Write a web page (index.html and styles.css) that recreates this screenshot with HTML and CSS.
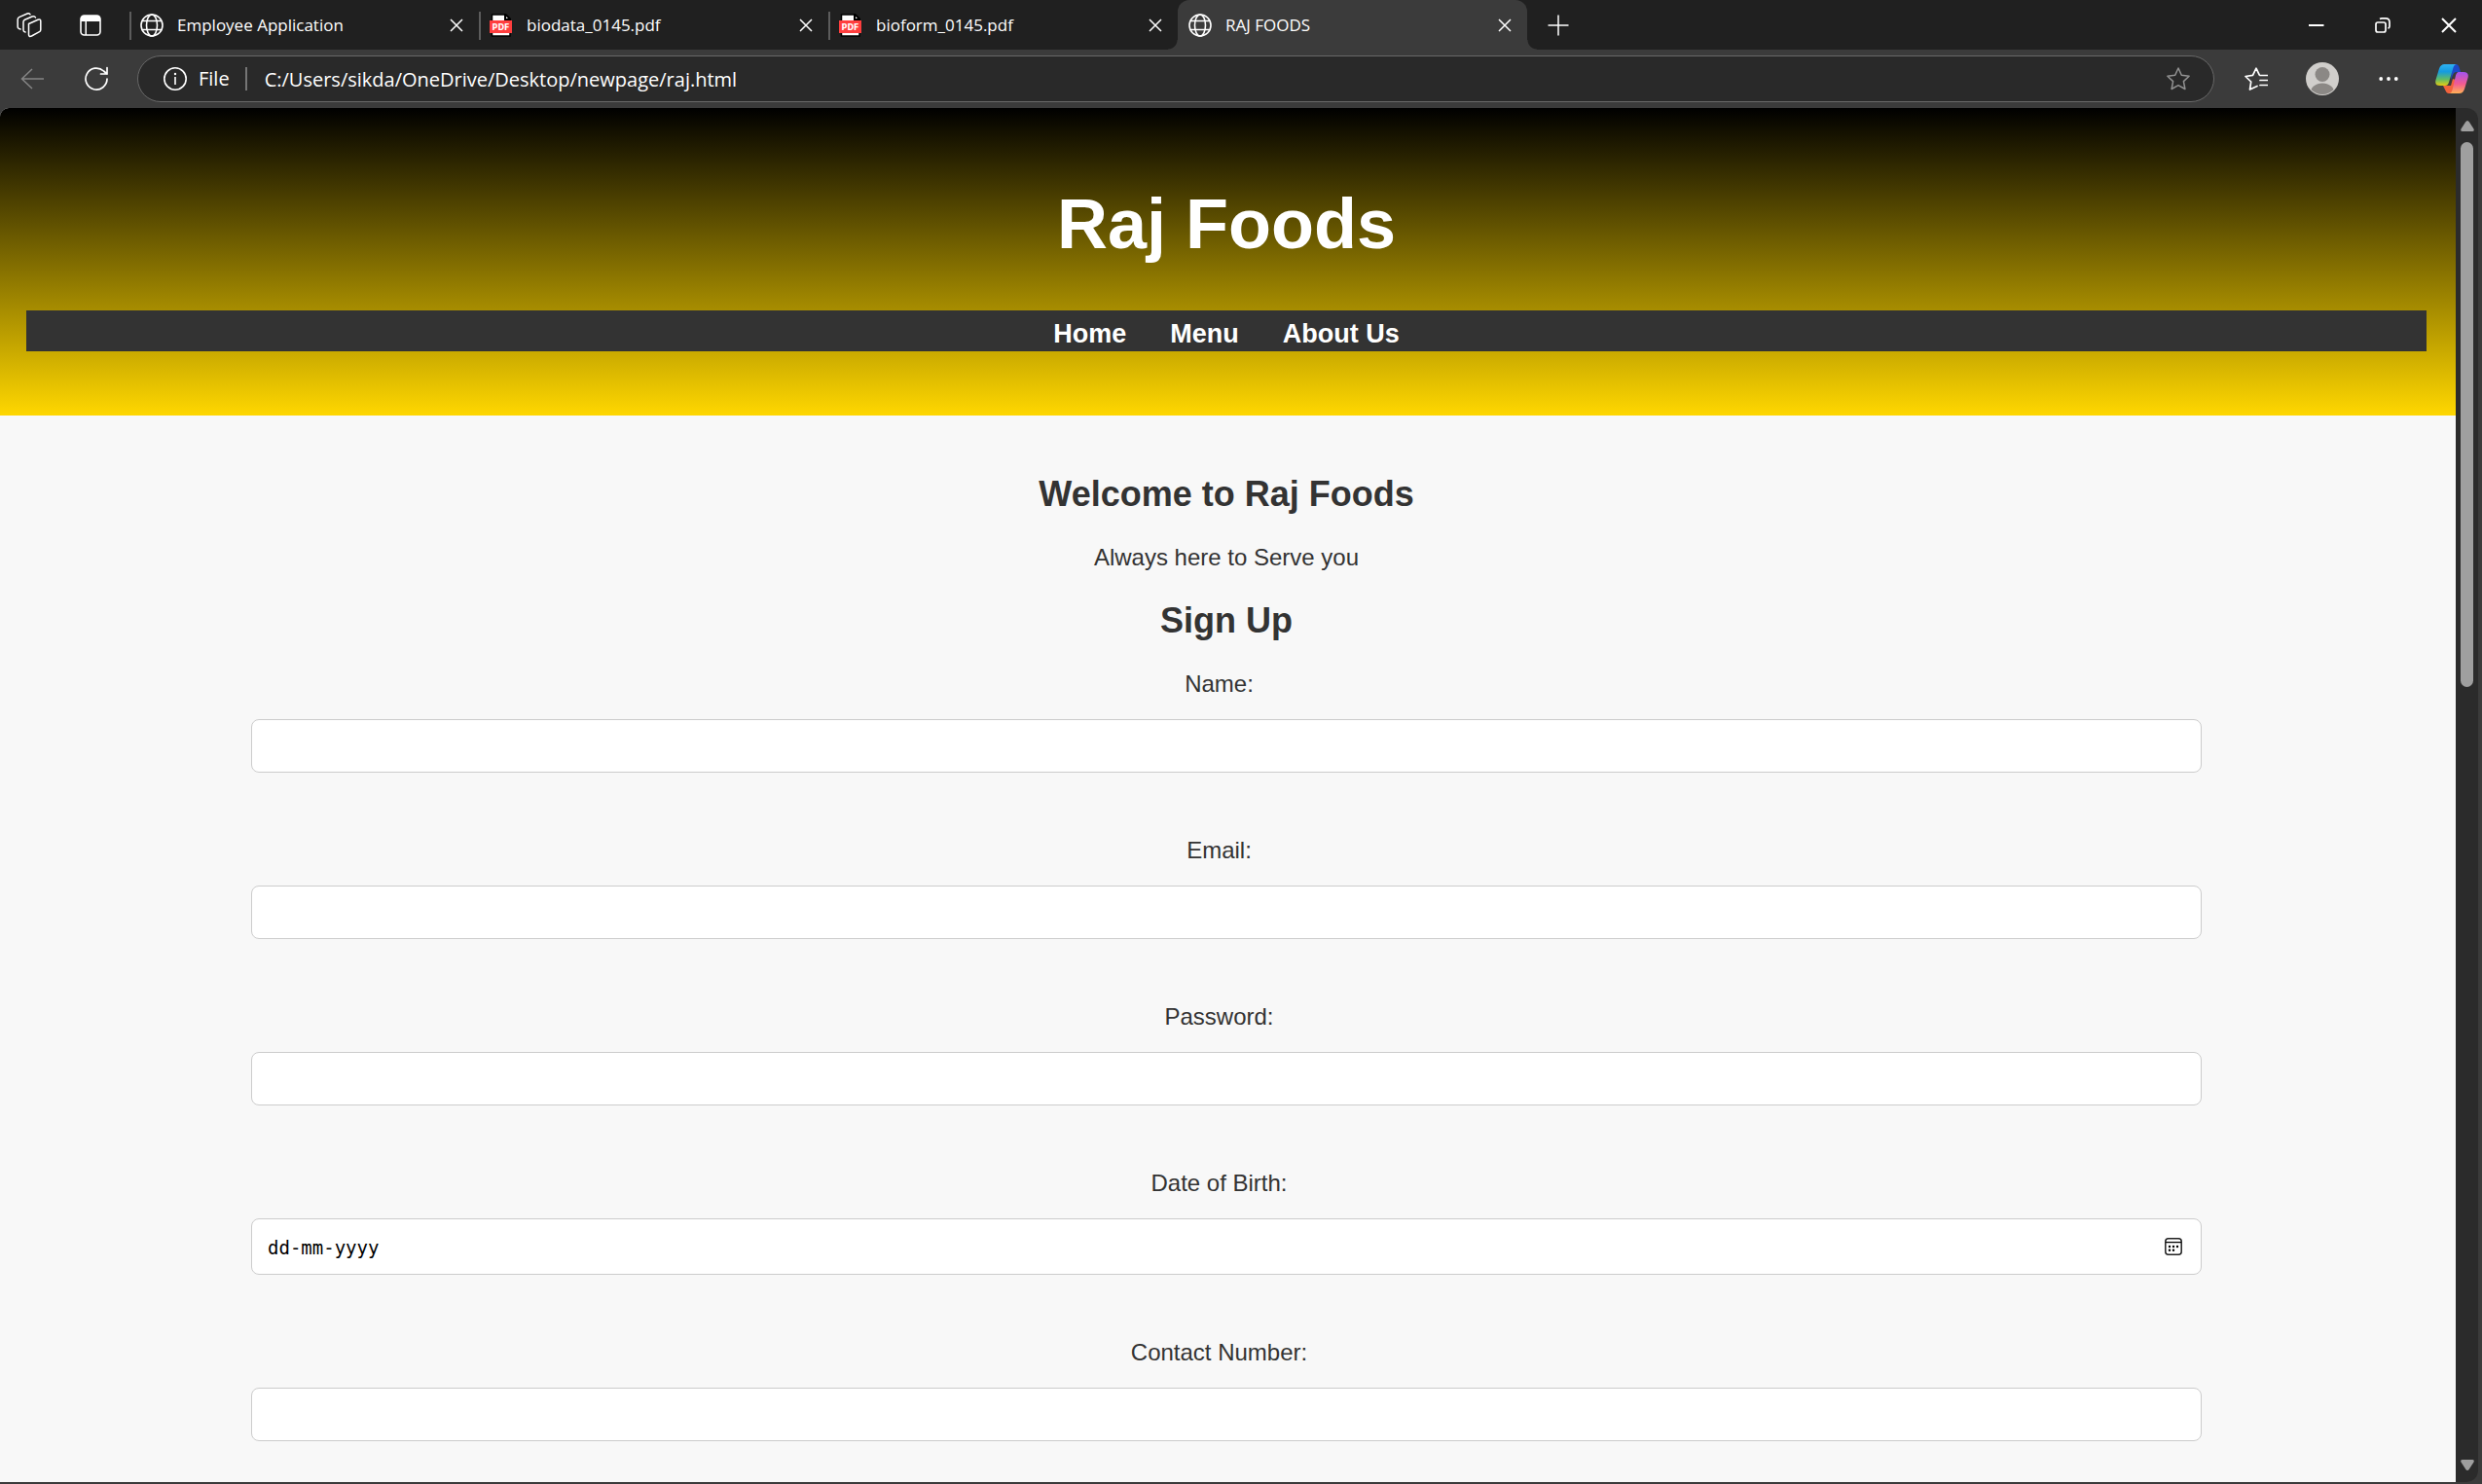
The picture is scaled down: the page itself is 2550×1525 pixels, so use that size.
FILE: index.html
```html
<!DOCTYPE html>
<html lang="en">
<head>
<meta charset="utf-8">
<title>RAJ FOODS</title>
<link rel="stylesheet" href="styles.css">
</head>
<body>
<svg class="sprite" width="0" height="0" aria-hidden="true">
  <symbol id="globe" viewBox="0 0 24 24"><g fill="none" stroke="#fff" stroke-width="1.6"><circle cx="12" cy="12" r="11"/><ellipse cx="12" cy="12" rx="5.5" ry="11"/><path d="M2 7.5h20M2 16.5h20"/></g></symbol>
  <symbol id="cross" viewBox="0 0 14 14"><path d="M1 1l12 12M13 1L1 13" fill="none" stroke="#fff" stroke-width="1.5"/></symbol>
  <symbol id="pdf" viewBox="0 0 24 24"><path d="M2.500 1h13l5.500 5.500V23H2.500z" fill="#fff" stroke="#000" stroke-width="1.500"/><path d="M15 0h2l5 5v2h-7z" fill="#000"/><path d="M17 3l2 2h-2z" fill="#fff"/><rect x="0" y="7" width="23" height="13" fill="#ff3e3e"/></symbol>
</svg>

<div class="tab-strip">
  <button class="strip-button" aria-label="Workspaces"><svg width="26" height="26" viewBox="0 0 26 26" fill="none" stroke="#fff" stroke-width="1.500" stroke-linejoin="round" stroke-linecap="round"><path d="M12.500 11.500l9.500-4.300q2.800-1 2.800 1.500v8.800q0 1.500-1.300 2.200l-8 4.300q-3 1.300-3-1.500z"/><path d="M9 20q-2-.5-2-2V9.500q0-1.500 1.500-2.200L16 4q2.500-1 3.500 1"/><path d="M4 17q-2.800-.5-2.800-2.500V7q0-1.700 1.500-2.400L11 1q2-.8 3 .8"/></svg></button>
  <button class="strip-button" aria-label="Tab actions"><svg width="22" height="22" viewBox="0 0 22 22"><rect x="1" y="1" width="20" height="20" rx="3.500" fill="none" stroke="#fff" stroke-width="1.600"/><path d="M1 7V4q0-3 3-3h14q3 0 3 3v3zM5.500 7h1.500v14H5.500z" fill="#fff"/></svg></button>
  <div class="tab"><svg class="tab-icon"><use href="#globe"/></svg><span class="tab-title">Employee Application</span><button class="tab-close" aria-label="Close tab"><svg><use href="#cross"/></svg></button></div>
  <div class="tab"><svg class="tab-icon" viewBox="0 0 24 24"><use href="#pdf"/><text x="11.500" y="16.500" text-anchor="middle" class="pdf-text">PDF</text></svg><span class="tab-title">biodata_0145.pdf</span><button class="tab-close" aria-label="Close tab"><svg><use href="#cross"/></svg></button></div>
  <div class="tab"><svg class="tab-icon" viewBox="0 0 24 24"><use href="#pdf"/><text x="11.500" y="16.500" text-anchor="middle" class="pdf-text">PDF</text></svg><span class="tab-title">bioform_0145.pdf</span><button class="tab-close" aria-label="Close tab"><svg><use href="#cross"/></svg></button></div>
  <div class="tab active"><svg class="tab-icon"><use href="#globe"/></svg><span class="tab-title">RAJ FOODS</span><button class="tab-close" aria-label="Close tab"><svg><use href="#cross"/></svg></button></div>
  <button class="new-tab" aria-label="New tab"><svg width="22" height="22" viewBox="0 0 22 22"><path d="M11 .5v21M.5 11h21" stroke="#fff" stroke-width="1.500"/></svg></button>
  <div class="window-controls">
    <button aria-label="Minimize"><svg width="16" height="16" viewBox="0 0 16 16"><path d="M0 8h15.500" stroke="#fff" stroke-width="2"/></svg></button>
    <button aria-label="Restore"><svg width="16" height="16" viewBox="0 0 16 16" fill="none" stroke="#fff" stroke-width="1.700"><rect x="1" y="5" width="10" height="10" rx="2"/><path d="M5 1.500q1-.6 2-.6h4q4 0 4 4v4q0 1.500-1.500 2.300"/></svg></button>
    <button aria-label="Close"><svg width="16" height="16" viewBox="0 0 16 16"><path d="M1 1l14 14M15 1L1 15" stroke="#fff" stroke-width="2"/></svg></button>
  </div>
</div>

<div class="toolbar">
  <button class="nav-button" aria-label="Back"><svg width="24" height="24" viewBox="0 0 24 24" fill="none" stroke="#858585" stroke-width="1.500"><path d="M12 2L1.500 12L12 22M1.500 12H24"/></svg></button>
  <button class="nav-button" aria-label="Refresh"><svg width="26" height="26" viewBox="0 0 26 26" fill="none" stroke="#fff" stroke-width="1.700" stroke-linecap="round"><path d="M24 13a11 11 0 1 1-3.500-8L24 8M24 1.500V8h-6.500"/></svg></button>
  <div class="address-bar">
    <svg class="info" width="24" height="24" viewBox="0 0 24 24"><circle cx="12" cy="12" r="11.200" fill="none" stroke="#fff" stroke-width="1.600"/><path d="M12 10v8" stroke="#fff" stroke-width="1.600"/><circle cx="12" cy="7" r="1.200" fill="#fff"/></svg>
    <span class="scheme">File</span>
    <input class="url" type="text" aria-label="Address" value="C:/Users/sikda/OneDrive/Desktop/newpage/raj.html">
    <button class="star" aria-label="Add to favorites"><svg width="24" height="24" viewBox="0 0 24 24" fill="none" stroke="#929292" stroke-width="1.500" stroke-linejoin="round"><path d="M12 1l3.300 7.200 7.800 1-5.700 5.400 1.500 7.900L12 18.700l-6.900 3.800 1.500-7.900L.9 9.200l7.800-1z"/></svg></button>
  </div>
  <div class="tools">
    <button aria-label="Favorites"><svg width="24" height="24" viewBox="0 0 24 24" fill="none" stroke="#fff" stroke-width="1.700" stroke-linejoin="round" stroke-linecap="round"><path d="M13 19.500L5.500 23l1.200-8L1 9.500l7.500-1.200L12 1.200l3.200 6.600M16 8.500h7.500M16 13.500h7.500M16 18.500h7.500"/></svg></button>
    <button aria-label="Profile"><svg width="34" height="34" viewBox="0 0 34 34"><clipPath id="face"><circle cx="17" cy="17" r="16"/></clipPath><circle cx="17" cy="17" r="17" fill="#d0cecb"/><circle cx="17" cy="12.500" r="7.500" fill="#8b8885"/><ellipse cx="17" cy="32" rx="12.500" ry="10.500" fill="#8b8885" clip-path="url(#face)"/></svg></button>
    <button aria-label="Settings and more"><svg width="20" height="6" viewBox="0 0 20 6" fill="#fff"><circle cx="2.200" cy="3" r="1.900"/><circle cx="10" cy="3" r="1.900"/><circle cx="17.800" cy="3" r="1.900"/></svg></button>
    <button class="copilot" aria-label="Copilot"><svg width="34" height="30" viewBox="0 0 34 30">
      <defs>
        <linearGradient id="cool" x1="0" y1="0" x2="0" y2="1"><stop offset="0" stop-color="#2fb2f2"/><stop offset=".35" stop-color="#159be0"/><stop offset=".7" stop-color="#5fbb67"/><stop offset="1" stop-color="#e6cb12"/></linearGradient>
        <linearGradient id="warm" x1="0" y1="0" x2="0" y2="1"><stop offset="0" stop-color="#a253ee"/><stop offset=".55" stop-color="#f25a92"/><stop offset="1" stop-color="#ffb155"/></linearGradient>
      </defs>
      <path d="M17 0h4q2.500 0 3.500 3l1.500 5h-4q-3 0-4 3l-2 5z" fill="#1c49c8"/>
      <path d="M8 22h8l2-7 3 1-3 14h-4q-2.500 0-3.500-3z" fill="#f2623c"/>
      <path d="M9.500 0H22q-2.500 0-3.500 3.500L14 18.500Q13 22 10 22H5q-6 0-4.500-6L4 4.500Q5.500 0 9.500 0z" fill="url(#cool)"/>
      <path d="M24 8h5q6 0 4.500 6L30 25.500Q28.500 30 24.500 30H14q2.500 0 3.500-3.500L21 11.500Q22 8 24 8z" fill="url(#warm)"/>
    </svg></button>
  </div>
</div>

<div class="viewport">
  <div class="page">
    <header class="site-header">
      <h1>Raj Foods</h1>
      <nav><a href="#home">Home</a><a href="#menu">Menu</a><a href="#about">About Us</a></nav>
    </header>
    <main>
      <h2>Welcome to Raj Foods</h2>
      <p>Always here to Serve you</p>
      <h2>Sign Up</h2>
      <form>
        <div class="field"><label for="name">Name:</label><input id="name" type="text"></div>
        <div class="field"><label for="email">Email:</label><input id="email" type="email"></div>
        <div class="field"><label for="password">Password:</label><input id="password" type="password"></div>
        <div class="field"><label for="dob">Date of Birth:</label>
          <div class="date-box"><input id="dob" type="text" placeholder="dd-mm-yyyy"><button type="button" aria-label="Show date picker"><svg width="18" height="18" viewBox="0 0 18 18"><rect x=".8" y=".8" width="16.400" height="16.400" rx="3" fill="none" stroke="#222" stroke-width="1.500"/><path d="M1 4.600h16" stroke="#000" stroke-width="1.300"/><g fill="#000"><circle cx="5" cy="9" r="1.200"/><circle cx="9" cy="9" r="1.200"/><circle cx="13" cy="9" r="1.200"/><circle cx="5" cy="12.700" r="1.200"/><circle cx="9" cy="12.700" r="1.200"/></g></svg></button></div>
        </div>
        <div class="field"><label for="contact">Contact Number:</label><input id="contact" type="tel"></div>
      </form>
    </main>
  </div>
  <div class="scrollbar" aria-hidden="true">
    <svg width="14" height="11" viewBox="0 0 14 11"><path d="M5 1.500q2-3 4 0l4.500 7q1 2.500-1.500 2.500H2Q-.5 11 .5 8.500z" fill="#9f9f9f"/></svg>
    <div class="track"><div class="thumb"></div><div class="rest"></div></div>
    <svg width="14" height="11" viewBox="0 0 14 11"><path d="M5 9.500q2 3 4 0l4.500-7Q14.500 0 12 0H2Q-.5 0 .5 2.500z" fill="#9f9f9f"/></svg>
  </div>
</div>
</body>
</html>
```
FILE: styles.css
```css
* { box-sizing: border-box; }

body {
  margin: 0;
  height: 100vh;
  display: flex;
  flex-direction: column;
  overflow: hidden;
  background: #3b3b3b;
  color: #fff;
  font-family: "Open Sans", sans-serif;
}

button {
  display: flex;
  align-items: center;
  justify-content: center;
  padding: 0;
  border: 0;
  background: none;
}

svg { display: block; flex: none; }
.sprite { position: absolute; }

/* Tab strip */
.tab-strip {
  flex: none;
  height: 51px;
  display: flex;
  padding-left: 2px;
  background: #202020;
}
.strip-button { width: 56px; }
.strip-button + .strip-button { width: 70px; margin-right: 5px; }

.tab {
  flex: 0 1 359px;
  display: flex;
  align-items: center;
  padding: 0 10px 0 11px;
  background: linear-gradient(#5c5c5c, #5c5c5c) 0 12px / 2px 29px no-repeat;
}
.tab-icon { width: 24px; height: 24px; margin-right: 14px; }
.tab-title { flex: 1; font-size: 17px; line-height: 24px; white-space: nowrap; }
.tab-close { width: 26px; height: 26px; }
.tab-close svg { width: 14px; height: 14px; }
.tab.active { position: relative; background: #3b3b3b; border-radius: 12px 12px 0 0; }
.tab.active::before,
.tab.active::after {
  content: "";
  position: absolute;
  bottom: 0;
  width: 10px;
  height: 10px;
}
.tab.active::before { right: 100%; background: radial-gradient(circle at 0 0, #202020 9px, #3b3b3b 10px); }
.tab.active::after { left: 100%; background: radial-gradient(circle at 100% 0, #202020 9px, #3b3b3b 10px); }
.pdf-text { font: bold 8px "DejaVu Sans", sans-serif; fill: #fff; }

.new-tab { width: 64px; }
.window-controls { display: flex; margin-left: auto; }
.window-controls button { width: 68px; }

/* Toolbar */
.toolbar { flex: none; height: 60px; display: flex; align-items: center; }
.nav-button { width: 66px; height: 48px; }
.address-bar {
  flex: 1;
  height: 48px;
  display: flex;
  align-items: center;
  margin: 0 9px;
  padding: 0 24px 0 26px;
  border: 1px solid #686868;
  border-radius: 24px;
  background: #292929;
}
.scheme {
  margin-left: 12px;
  padding-right: 16px;
  border-right: 2px solid #757575;
  font-size: 20px;
  line-height: 24px;
}
.url {
  flex: 1;
  padding: 0;
  margin-left: 18px;
  border: 0;
  background: none;
  color: #fff;
  font: 20px "Open Sans", sans-serif;
}
.tools { display: flex; }
.tools button { width: 68px; height: 48px; }
.tools .copilot { width: 62px; }

/* Viewport */
.viewport {
  flex: 1;
  min-height: 0;
  display: flex;
  margin: 0 4px 2px 0;
  border-radius: 9px 12px 12px 0;
  overflow: hidden;
}
.page {
  flex: 1;
  overflow: hidden;
  background: #f8f8f8;
  color: #333;
  font-family: "Liberation Sans", Arial, sans-serif;
  font-size: 24px;
  line-height: 27px;
  text-align: center;
}
h1, h2, p { margin: 0; }

.site-header {
  padding: 78px 30px 66px 27px;
  background: linear-gradient(#000, #ffd700);
  color: #fff;
}
h1 { margin-bottom: 48px; font-size: 72px; line-height: 82px; }
nav {
  display: flex;
  justify-content: center;
  gap: 45px;
  padding-top: 6px;
  background: #333;
}
nav a {
  color: #fff;
  font-size: 27px;
  font-weight: bold;
  line-height: 36px;
  text-decoration: none;
}

main {
  display: flex;
  flex-direction: column;
  gap: 31px;
  padding: 60px 30px 60px 27px;
}
h2 { font-size: 36px; line-height: 41px; }
form { display: flex; flex-direction: column; gap: 66px; padding: 0 231px; }
.field { display: flex; flex-direction: column; gap: 23px; }
.field label { padding-right: 15px; }
.field > input,
.date-box {
  width: 100%;
  height: 55px;
  padding: 0 16px;
  border: 1px solid #ccc;
  border-radius: 8px;
  background: #fff;
}
.date-box { height: 58px; display: flex; align-items: center; padding: 0 19px 0 16px; }
.date-box input {
  flex: 1;
  padding: 2px 0 0;
  border: 0;
  background: none;
  font: 19px "DejaVu Sans Mono", monospace;
}
.date-box input::placeholder { color: #000; opacity: 1; }

/* Scrollbar */
.scrollbar {
  flex: none;
  width: 23px;
  display: flex;
  flex-direction: column;
  align-items: center;
  gap: 11px;
  padding: 13px 0 12px;
  background: #2b2b2b;
}
.track { flex: 1; width: 13px; display: flex; flex-direction: column; }
.thumb { flex: 5; border-radius: 7px; background: #9f9f9f; }
.rest { flex: 7; }
```
